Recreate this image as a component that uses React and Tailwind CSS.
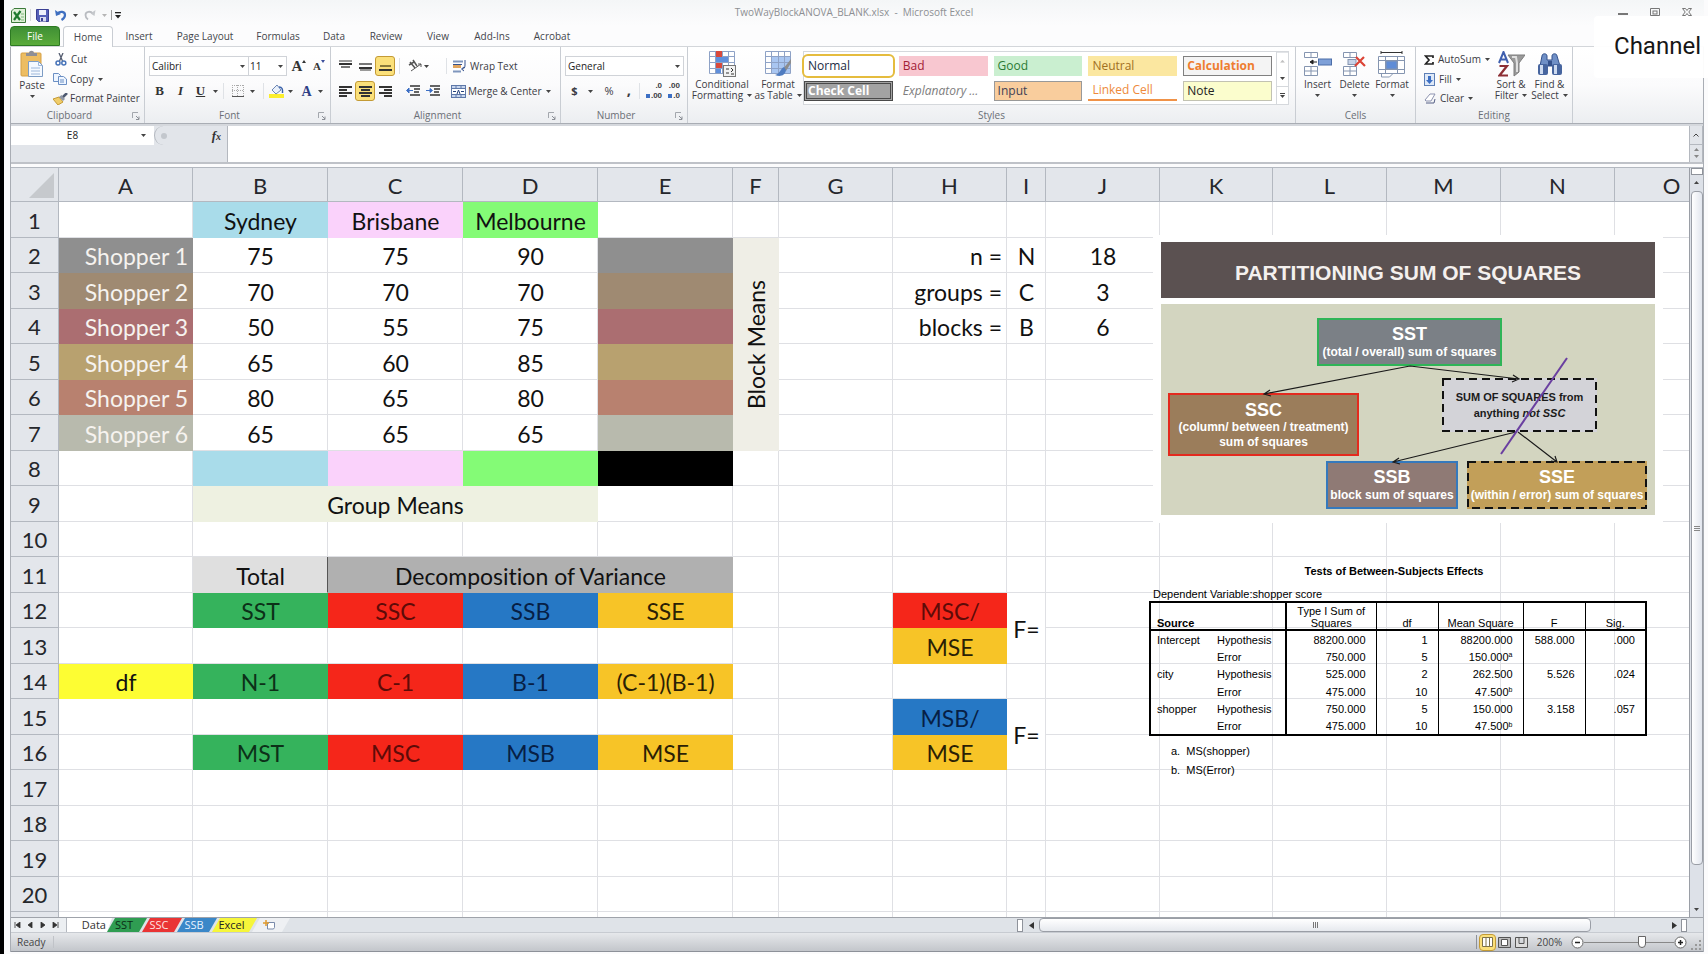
import React from 'react';

const UI = "font-['Open_Sans','Noto_Sans',sans-serif]";

/* ---------- small shared pieces ---------- */

function Caret({ className = 'text-[#444]' }) {
  return (
    <svg width="5" height="3" viewBox="0 0 5 3" className={'shrink-0 ' + className} aria-hidden="true">
      <path d="M0 0h5L2.5 3z" fill="currentColor" />
    </svg>
  );
}

function IconButton({ label, className = '', children }) {
  return (
    <button type="button" aria-label={label} className={'flex h-5 items-center justify-center ' + className}>
      {children}
    </button>
  );
}

function Group({ title, className = '', launcher = false, children }) {
  return (
    <section aria-label={title} className={'flex h-[76px] shrink-0 flex-col border-r border-[#c9cdd3] ' + className}>
      <div className="h-[61px]">{children}</div>
      <div className={'relative flex h-[15px] items-center justify-center text-[10px] leading-[15px] text-[#6b6f76] ' + (launcher ? 'pr-4' : '')}>
        {title}
        {launcher && (
          <button type="button" aria-label={title + ' options'} className="absolute right-1 top-1">
            <svg width="8" height="8" viewBox="0 0 8 8" fill="none" stroke="#a3a7ad">
              <path d="M.5 6V.5H6" />
              <path d="M4 4l3 3M7 4.5V7.5H4" stroke="#8b8f96" />
            </svg>
          </button>
        )}
      </div>
    </section>
  );
}

function Divider() {
  return <span className="h-4 w-px bg-[#dfe2e6]" />;
}

function Lines({ rows, w = 13 }) {
  return (
    <svg width={w} height="12" viewBox="0 0 13 12" aria-hidden="true">
      {rows.map(([x, y, len, c], i) => (
        <rect key={i} x={x} y={y} width={len} height="2" fill={c || '#333'} />
      ))}
    </svg>
  );
}

function BigButton({ lines, className = '', children }) {
  return (
    <button type="button" className={'flex h-14 flex-col items-center text-[10px] leading-[11px] text-[#3b3b44] ' + className}>
      <span className="flex h-[30px] items-center">{children}</span>
      <span className="whitespace-nowrap">{lines[0]}</span>
      <span className="flex h-[11px] items-center gap-1 whitespace-nowrap">
        {lines[1]}
        <Caret />
      </span>
    </button>
  );
}

/* ---------- title bar and tabs ---------- */

function TitleBar() {
  return (
    <header className="relative flex h-[26px] items-center bg-gradient-to-b from-[#f4f6f7] to-[#fcfcfd] pl-px">
      <svg width="15" height="15" viewBox="0 0 15 15" className="mt-1" aria-hidden="true">
        <path d="M3 .5h11.5v14H.5V3z" fill="#dff0d8" stroke="#3c7a3a" />
        <path d="M3 4l6 8M9.500 3L3 12" stroke="#1f7a2e" strokeWidth="2.200" />
        <path d="M10 6h3M10 9h3M10 12h3" stroke="#7fb77a" />
      </svg>
      <span className="ml-1 mt-1 h-3 w-px bg-[#d5d7da]" />
      <button type="button" aria-label="Save" className="ml-[5px] mt-1">
        <svg width="13" height="13" viewBox="0 0 13 13">
          <path d="M.5.5h12v12h-10l-2-2z" fill="#5560b8" stroke="#3a3f93" />
          <rect x="3" y="1" width="7" height="5" fill="#eef1fb" />
          <rect x="4" y="8" width="6" height="4.500" fill="#d9dcf0" />
          <rect x="5" y="9" width="2" height="3" fill="#3a3f93" />
        </svg>
      </button>
      <button type="button" aria-label="Undo" className="ml-1.5 mt-1 flex items-center gap-1.5 text-[#222]">
        <svg width="12" height="12" viewBox="0 0 12 12" fill="none">
          <path d="M2.500 4.500C5 1.800 10 2.300 10 6c0 2-1.500 3.800-3.500 5" stroke="#3f6fc0" strokeWidth="2.200" />
          <path d="M0 1l1 6 5-2z" fill="#3f6fc0" />
        </svg>
        <Caret />
      </button>
      <button type="button" aria-label="Redo" className="ml-1.5 mt-1 flex items-center gap-1.5">
        <svg width="12" height="12" viewBox="0 0 12 12" fill="none">
          <path d="M9 4.500C6.500 1.800 1.500 2.300 1.500 6c0 2 1 3.500 2.500 4.500" stroke="#b9bcc1" strokeWidth="1.800" />
          <path d="M11.500 1l-1 6-4-2.500z" fill="#c5c8cc" />
        </svg>
        <Caret className="text-[#b5b5b5]" />
      </button>
      <span className="ml-1 mt-1 h-2.5 w-px bg-[#999]" />
      <button type="button" aria-label="Customize toolbar" className="ml-[3px] mt-1">
        <svg width="6" height="7" viewBox="0 0 6 7" fill="#222">
          <rect width="6" height="1.300" />
          <path d="M0 3h6L3 6.500z" />
        </svg>
      </button>
      <h1 className="absolute inset-x-0 top-1 pr-1.5 text-center text-[10px] leading-4 text-[#8d8f93]">
        TwoWayBlockANOVA_BLANK.xlsx&nbsp; -&nbsp; Microsoft Excel
      </h1>
      <div className="relative ml-auto flex items-center gap-[22px] pb-0.5 pr-3 text-[#666]">
        <button type="button" aria-label="Minimize"><svg width="10" height="8" viewBox="0 0 10 8"><rect y="5" width="10" height="2" fill="#777" /></svg></button>
        <button type="button" aria-label="Restore"><svg width="10" height="8" viewBox="0 0 10 8" fill="none" stroke="#777"><path d="M.5 7.500v-7h9v7z" /><rect x="3" y="3" width="4" height="3" /></svg></button>
        <button type="button" aria-label="Close"><svg width="10" height="8" viewBox="0 0 10 8" fill="none" stroke="#777"><path d="M.5.500h3L5 2.500 6.500.500h3L6.800 4l2.700 3.500h-3L5 5.500 3.500 7.500h-3L3.200 4z" /></svg></button>
      </div>
    </header>
  );
}

const TABS = [
  ['Insert', 'w-[52px]'],
  ['Page Layout', 'w-20'],
  ['Formulas', 'w-[66px]'],
  ['Data', 'w-[46px]'],
  ['Review', 'w-[58px]'],
  ['View', 'w-[46px]'],
  ['Add-Ins', 'w-[62px]'],
  ['Acrobat', 'w-[58px]'],
];

function RibbonTabs() {
  return (
    <nav className="flex h-[21px] items-stretch border-b border-[#d3d6da] bg-[#fcfcfd] text-[10px] text-[#44464c]">
      <button type="button" className="w-[50px] rounded-t-sm border border-[#2d7a22] bg-gradient-to-b from-[#3f8f35] to-[#5aab3a] pt-px text-white">File</button>
      <button type="button" className="-mb-px ml-[3px] w-[50px] rounded-t-sm border border-b-0 border-[#c9cdd3] bg-white">Home</button>
      {TABS.map(([t, w]) => (
        <button key={t} type="button" className={'pt-px ' + w}>{t}</button>
      ))}
    </nav>
  );
}

/* ---------- ribbon groups ---------- */

function ClipboardGroup() {
  return (
    <Group title="Clipboard" launcher className="w-[134px]">
      <div className="flex pt-[3px]">
        <button type="button" className="flex w-[42px] flex-col items-center text-[10px] leading-[11px] text-[#3b3b44]">
          <svg width="24" height="28" viewBox="0 0 24 28" aria-hidden="true">
            <rect x="1" y="3" width="20" height="23" rx="1" fill="#edbd62" stroke="#d59f45" />
            <path d="M6 5V3h3c0-3 5-3 5 0h3v3H6z" fill="#8f8f96" />
            <path d="M8.500 11.500h10l4 4v11h-14z" fill="#f5f9ff" stroke="#7d9cc4" />
            <path d="M18.500 11.500v4h4M11 18h9M11 21h9M11 24h9" stroke="#9db7da" fill="none" />
          </svg>
          <span className="mt-0.5">Paste</span>
          <span className="mt-1"><Caret /></span>
        </button>
        <div className="flex flex-col text-[10px] leading-[19px] text-[#3b3b44]">
          <button type="button" className="flex h-[19px] items-center gap-1 pl-0.5">
            <svg width="12" height="13" viewBox="0 0 12 13" fill="none">
              <path d="M4 0l3.500 8M8 0L4.500 8" stroke="#555d70" strokeWidth="1.300" />
              <circle cx="3" cy="10" r="2" stroke="#4673b8" strokeWidth="1.500" />
              <circle cx="8.800" cy="10" r="2" stroke="#4673b8" strokeWidth="1.500" />
            </svg>
            Cut
          </button>
          <button type="button" className="flex h-5 items-center gap-[3px]">
            <svg width="14" height="12" viewBox="0 0 14 12" fill="#eef5ff" stroke="#6b8fc4">
              <path d="M.5.500h5l2 2v6h-7z" /><path d="M5.500 3.500h5l3 2.500v5.500h-8z" /><path d="M7 7h4M7 9h4" />
            </svg>
            Copy <span className="ml-0.5"><Caret /></span>
          </button>
          <button type="button" className="flex h-[19px] items-center gap-0.5 whitespace-nowrap">
            <svg width="15" height="12" viewBox="0 0 15 12">
              <path d="M0 6l6-2 4 5-5 3z" fill="#f0cd6a" stroke="#c59a35" /><path d="M6 4l4 4 2-2-3.500-4z" fill="#8f96a5" /><path d="M10 4l4-4" stroke="#4c5870" strokeWidth="2.500" />
            </svg>
            Format Painter
          </button>
        </div>
      </div>
    </Group>
  );
}

function FontGroup() {
  return (
    <Group title="Font" launcher className="w-[186px] text-[#333]">
      <div className="flex h-[29px] items-end pl-1">
        <label className="relative flex h-5 w-[100px] items-center">
          <select aria-label="Font" className="h-5 w-full appearance-none border border-[#d0d3d8] bg-white pl-0.5 text-[10px] text-[#222]"><option>Calibri</option></select>
          <span className="absolute right-1"><Caret /></span>
        </label>
        <label className="relative -ml-px flex h-5 w-[39px] items-center">
          <select aria-label="Font size" className="h-5 w-full appearance-none border border-[#d0d3d8] bg-white pl-px text-[10px] text-[#222]"><option>11</option></select>
          <span className="absolute right-1"><Caret /></span>
        </label>
        <IconButton label="Grow font" className="ml-1 w-4 font-['Liberation_Serif',serif] text-[15px] font-bold">
          A<svg width="4" height="12" viewBox="0 0 4 12"><path d="M0 3l2-3 2 3z" fill="#333" /></svg>
        </IconButton>
        <IconButton label="Shrink font" className="ml-1 w-4 font-['Liberation_Serif',serif] text-[11px] font-bold">
          A<svg width="4" height="12" viewBox="0 0 4 12"><path d="M0 0h4L2 3z" fill="#3c4f9c" /></svg>
        </IconButton>
      </div>
      <div className="flex h-[30px] items-center pl-1 font-['Liberation_Serif',serif]">
        <IconButton label="Bold" className="w-[21px] text-[13px] font-bold">B</IconButton>
        <IconButton label="Italic" className="w-[21px] text-[13px] font-bold italic">I</IconButton>
        <IconButton label="Underline" className="w-[32px] gap-2 text-[13px] font-bold underline">U<Caret /></IconButton>
        <Divider />
        <IconButton label="Borders" className="w-[39px] gap-1.5">
          <svg width="12" height="12" viewBox="0 0 12 12" fill="none"><path d="M.5 0v12M5.500 0v12M11.500 0v12M0 .5h12M0 5.500h12" stroke="#aaa" strokeDasharray="1 1" /><path d="M0 11.500h12" stroke="#555" /></svg>
          <Caret />
        </IconButton>
        <Divider />
        <IconButton label="Fill color" className="w-[33px] gap-1">
          <svg width="15" height="14" viewBox="0 0 15 14"><rect y="10" width="15" height="4" fill="#fbee2e" /><path d="M3 6l5-5 4 5-5 4z" fill="#eaf1fb" stroke="#6d87b5" /><path d="M10 3c3 0 4 2 3.500 6" stroke="#3a62ab" strokeWidth="1.500" fill="none" /></svg>
          <Caret />
        </IconButton>
        <IconButton label="Font color" className="w-[30px] gap-1.5 text-[14px] font-bold text-[#2f3f86]">A<Caret /></IconButton>
      </div>
    </Group>
  );
}

const HI = 'w-5 rounded-[3px] border border-[#c39a35] bg-[#fbe07a]';

function AlignmentGroup() {
  const indent = (flip) => (
    <svg width="14" height="12" viewBox="0 0 14 12">
      <path d="M4 1h10M8 4h6M8 7h5M4 10h10" stroke="#333" strokeWidth="1.500" />
      <path d={flip ? 'M0 5.500h6M4 3.500l2.500 2L4 7.500z' : 'M1 5.500h6M3 3L.5 5.500 3 8z'} stroke="#3c6fc4" fill="#3c6fc4" />
    </svg>
  );
  return (
    <Group title="Alignment" launcher className="w-[230px] text-[10px] text-[#3b3b44]">
      <div className="flex h-[29px] items-end pl-1">
        <IconButton label="Top align" className="w-5"><Lines rows={[[0, 0, 13, '#999'], [0, 3, 13], [2, 6, 9, '#777']]} /></IconButton>
        <IconButton label="Middle align" className="w-5"><Lines rows={[[0, 3, 13, '#777'], [0, 7, 13], [1, 9, 11, '#999']]} /></IconButton>
        <IconButton label="Bottom align" className={HI}><Lines rows={[[1, 5, 11, '#8a7a3a'], [0, 9, 13]]} /></IconButton>
        <span className="ml-1 flex h-5 items-center"><Divider /></span>
        <IconButton label="Orientation" className="ml-1.5 w-6 gap-0.5">
          <svg width="14" height="14" viewBox="0 0 14 14" fill="none" stroke="#555"><path d="M3 12L13 5M10 5h3v3" /><path d="M2 3l5 6M5 1l4 6M1 6l5-3" strokeWidth="1.500" /></svg>
          <Caret />
        </IconButton>
        <span className="ml-4 flex h-5 items-center"><Divider /></span>
        <button type="button" className="ml-1.5 flex h-5 items-center gap-0.5">
          <svg width="15" height="13" viewBox="0 0 15 13" fill="none"><path d="M0 1.500h10M0 11.500h8" stroke="#7f96bd" strokeWidth="2" /><rect y="5" width="8" height="3" fill="#e0a45d" /><path d="M0 4.500h9M12 0v5c0 3-1 4-3 4M11 7L8.500 9 11 11" stroke="#35518d" /></svg>
          Wrap Text
        </button>
      </div>
      <div className="flex h-[30px] items-center pl-1">
        <IconButton label="Align left" className="w-5"><Lines rows={[[0, 1, 13], [0, 4, 8], [0, 7, 13], [0, 10, 8]]} /></IconButton>
        <IconButton label="Center" className={HI}><Lines rows={[[0, 1, 13], [2, 4, 9], [0, 7, 13], [2, 10, 9]]} /></IconButton>
        <IconButton label="Align right" className="w-5"><Lines rows={[[0, 1, 13], [5, 4, 8], [0, 7, 13], [5, 10, 8]]} /></IconButton>
        <span className="ml-1"><Divider /></span>
        <IconButton label="Decrease indent" className="ml-1 w-5">{indent(false)}</IconButton>
        <IconButton label="Increase indent" className="w-5">{indent(true)}</IconButton>
        <span className="ml-0.5"><Divider /></span>
        <button type="button" className="ml-1.5 flex h-5 items-center gap-0.5 whitespace-nowrap">
          <svg width="15" height="13" viewBox="0 0 15 13" fill="none"><rect x=".5" y=".5" width="14" height="12" fill="#c8d6ee" stroke="#5e78a8" /><path d="M1 3.500h13M1 9.500h13M5 1v2M10 1v2M5 10v2M10 10v2" stroke="#5e78a8" /><rect x="1" y="4" width="13" height="5" fill="#fff" /><path d="M2 6.500h3M13 6.500h-3M6 9l1.500-4L9 9" stroke="#26427c" /></svg>
          Merge &amp; Center <span className="ml-0.5"><Caret /></span>
        </button>
      </div>
    </Group>
  );
}

function NumberGroup() {
  const dec = (t, b) => (
    <span className="flex flex-col items-end font-['Liberation_Sans',sans-serif] text-[8px] font-bold leading-[10px]"><span>{t}</span><span className="flex items-center"><i className="mr-px size-1 bg-[#3c6fc4]" />{b}</span></span>
  );
  return (
    <Group title="Number" launcher className="w-[127px] text-[#3b3b44]">
      <div className="flex h-[29px] items-end pl-1">
        <label className="relative flex h-5 w-[119px] items-center">
          <select aria-label="Number format" className="h-5 w-full appearance-none border border-[#d0d3d8] bg-white pl-0.5 text-[10px] text-[#222]"><option>General</option></select>
          <span className="absolute right-1"><Caret /></span>
        </label>
      </div>
      <div className="flex h-[30px] items-center pl-2">
        <IconButton label="Accounting format" className="w-[26px] gap-2.5 text-[11px] font-bold">$<Caret /></IconButton>
        <IconButton label="Percent style" className="ml-1 w-5 text-[11px]">%</IconButton>
        <IconButton label="Comma style" className="w-5 pb-1 text-[15px] font-bold">,</IconButton>
        <Divider />
        <IconButton label="Increase decimal" className="ml-1 w-5">{dec('.0', '.00')}</IconButton>
        <IconButton label="Decrease decimal" className="w-5">{dec('.00', '.0')}</IconButton>
      </div>
    </Group>
  );
}

function StylesGroup() {
  const gridLines = 'M.5.500h25v22H.5zM6.500 0v23M13.500 0v23M19.500 0v23M0 5.500h26M0 11.500h26M0 17.500h26';
  const item = 'flex h-5 items-center px-1 text-left text-[12px] leading-4 whitespace-nowrap';
  return (
    <Group title="Styles" className="w-[608px]">
      <div className="flex">
        <BigButton lines={['Conditional', 'Formatting']} className="w-[68px] pt-0.5">
          <svg width="27" height="26" viewBox="0 0 27 26" fill="none">
            <path d={gridLines} fill="#fff" stroke="#8ea2c6" />
            <rect x="7" y="0" width="6" height="6" fill="#d9493b" /><rect x="7" y="6" width="12" height="5" fill="#5f8fdc" /><rect x="7" y="12" width="6" height="5" fill="#d9493b" /><rect x="7" y="18" width="5" height="4" fill="#5f8fdc" />
            <rect x="14.500" y="14.500" width="12" height="11" fill="#f2f2f2" stroke="#777" /><path d="M17 18h3M17 22h3M22 17l2 2-2 2M22 23h3" stroke="#333" />
          </svg>
        </BigButton>
        <BigButton lines={['Format', 'as Table']} className="w-11 pt-0.5">
          <svg width="27" height="26" viewBox="0 0 27 26" fill="none">
            <rect x="7" y="6" width="18" height="16" fill="#a9c6f1" /><path d={gridLines} stroke="#8ea2c6" />
            <path d="M26 8L18 18l3 2 5-8z" fill="#8d8d8d" /><path d="M19 16c-4 2-3 6-9 8 5 2 10 1 11-5z" fill="#4f7cc0" />
          </svg>
        </BigButton>
        <div className="ml-[3px] mt-1 flex h-[54px] flex-1 border border-[#d5d8dc] bg-white">
          <div className="grid flex-1 grid-cols-5 content-center gap-x-1.5 gap-y-[5px] pr-1">
            <button type="button" className={item + ' rounded-sm bg-white text-[#1c2c44] outline-2 outline-[#e5bc3e]'}>Normal</button>
            <button type="button" className={item + ' bg-[#f8c7d0] text-[#a32036]'}>Bad</button>
            <button type="button" className={item + ' bg-[#caefd0] text-[#2c7a35]'}>Good</button>
            <button type="button" className={item + ' bg-[#fbe7a0] text-[#a1701f]'}>Neutral</button>
            <button type="button" className={item + ' border border-[#808080] bg-[#f4f4f4] !px-[3px] font-bold text-[#ee7d2f]'}>Calculation</button>
            <button type="button" className={item + ' border-[3px] border-double border-[#4a4a4a] bg-[#a3a3a3] !px-px font-bold text-white'}>Check Cell</button>
            <button type="button" className={item + ' italic text-[#7d7d7d]'}>Explanatory ...</button>
            <button type="button" className={item + ' border border-[#999] bg-[#f9cd9d] !px-[3px] text-[#3f3f55]'}>Input</button>
            <button type="button" className={item + ' border-b-2 border-[#f09248] text-[#ee8a3c]'}>Linked Cell</button>
            <button type="button" className={item + ' border border-[#c2c2b2] bg-[#fbfdcd] !px-[3px] text-[#222]'}>Note</button>
          </div>
          <div className="flex w-3 flex-col divide-y divide-[#d5d8dc] border-l border-[#d5d8dc]">
            <button type="button" aria-label="Previous styles" className="flex flex-1 rotate-180 items-center justify-center"><Caret className="text-[#c0c0c0]" /></button>
            <button type="button" aria-label="Next styles" className="flex flex-1 items-center justify-center"><Caret /></button>
            <button type="button" aria-label="More styles" className="flex flex-1 flex-col items-center justify-center gap-px"><i className="h-px w-[5px] bg-[#444]" /><Caret /></button>
          </div>
        </div>
        <span className="w-1.5" />
      </div>
    </Group>
  );
}

function CellsGroup() {
  return (
    <Group title="Cells" className="w-[120px]">
      <div className="flex pl-[3px]">
        <BigButton lines={['Insert', '']} className="w-[37px] pt-0.5">
          <svg width="28" height="25" viewBox="0 0 28 25" fill="#fff" stroke="#8595b0">
            <path d="M.5.500h13v5H.5zM7 .5v5M.5 14.500h13v9H.5zM7 14.500v9M.5 19h13" /><rect x="14.500" y="7" width="13" height="6" fill="#7ea0d8" stroke="#4d6ea8" /><path d="M7 10h6M9 8l-3 2 3 2z" stroke="#222" fill="#222" />
          </svg>
        </BigButton>
        <BigButton lines={['Delete', '']} className="w-[37px] pt-0.5">
          <svg width="24" height="25" viewBox="0 0 24 25" fill="#fff" stroke="#8595b0">
            <path d="M.5.500h13v5H.5zM7 .5v5M.5 14.500h13v9H.5zM7 14.500v9M.5 19h13" /><rect x="5" y="7.500" width="8" height="5" fill="#c7d3e8" /><path d="M13 5l9 9M21 5l-9 9" stroke="#dc4436" strokeWidth="2.200" />
          </svg>
        </BigButton>
        <BigButton lines={['Format', '']} className="w-[38px] pt-0.5">
          <svg width="28" height="27" viewBox="0 0 28 27" fill="#fff" stroke="#8595b0">
            <path d="M3 1.500h21M3 0v3M24 0v3" stroke="#333" /><path d="M.5 5.500h26v17H.5zM7.500 5.500v17M19.500 5.500v17M.5 9.500h26M.5 18.500h26" /><rect x="8" y="10" width="11" height="8" fill="#5f8cd6" /><path d="M3.500 23v3h8l3-3" />
          </svg>
        </BigButton>
      </div>
    </Group>
  );
}

function EditingGroup() {
  return (
    <Group title="Editing" className="w-[157px]">
      <div className="flex pl-2">
        <div className="flex w-[67px] flex-col pt-[3px] text-[10px] text-[#3b3b44]">
          <button type="button" className="flex h-[19px] items-center gap-1 whitespace-nowrap">
            <svg width="10" height="10" viewBox="0 0 10 10" fill="none"><path d="M9 3V1H1.500L5 5 1.500 9H9V7" stroke="#222" strokeWidth="1.700" /></svg>
            AutoSum <Caret />
          </button>
          <button type="button" className="flex h-5 items-center gap-1">
            <svg width="11" height="13" viewBox="0 0 11 13"><rect x=".5" y=".5" width="10" height="12" fill="#dfe9f8" stroke="#5d7fb6" /><path d="M4 3h3v4h2l-3.500 4L2 7h2z" fill="#3c6fc4" /></svg>
            Fill <Caret />
          </button>
          <button type="button" className="flex h-[19px] items-center gap-1">
            <svg width="12" height="11" viewBox="0 0 12 11"><path d="M1 7l5-6h5L7 8H2z" fill="#fff" stroke="#8d93b0" /><path d="M2 10h8l1-4" stroke="#555f85" fill="none" /></svg>
            Clear <Caret />
          </button>
        </div>
        <BigButton lines={['Sort &', 'Filter']} className="w-10 pt-0.5">
          <svg width="27" height="26" viewBox="0 0 27 26" fill="none">
            <path d="M1 12L5.500 1 10 12M3 8.500h5" stroke="#3f5fae" strokeWidth="2" /><path d="M1.500 15H9L1.500 24.500H10" stroke="#8d2f35" strokeWidth="2.200" />
            <path d="M10 4h17l-6 8v9l-5 4V12z" fill="#9a9a9a" stroke="#7d7d7d" /><path d="M14 6h4l1 6v9" stroke="#e0e0e0" strokeWidth="2" />
          </svg>
        </BigButton>
        <BigButton lines={['Find &', 'Select']} className="w-[37px] pt-0.5">
          <svg width="26" height="24" viewBox="0 0 26 24">
            <path d="M5 4c0-3 5-3 5 0v4h5V4c0-3 5-3 5 0l3 10H3z" fill="#6f8fc6" stroke="#34518c" />
            <rect x="1" y="12" width="10" height="11" rx="2" fill="#47659f" /><rect x="15" y="12" width="10" height="11" rx="2" fill="#47659f" />
            <rect x="3" y="13" width="3" height="9" fill="#cddaf0" /><rect x="17" y="13" width="3" height="9" fill="#cddaf0" /><rect x="11" y="9" width="4" height="5" fill="#34518c" />
          </svg>
        </BigButton>
      </div>
    </Group>
  );
}

function Ribbon() {
  return (
    <div className="flex h-[77px] overflow-hidden border-b border-[#a9adb4] bg-gradient-to-b from-white via-[#fbfbfc] to-[#eceef1]">
      <ClipboardGroup />
      <FontGroup />
      <AlignmentGroup />
      <NumberGroup />
      <StylesGroup />
      <CellsGroup />
      <EditingGroup />
    </div>
  );
}

function FormulaBar() {
  return (
    <div className="flex h-10 border-b-2 border-t-2 border-b-[#bfc2c8] border-t-[#d5d8dd] bg-[#e2e5ea]">
      <div className="relative h-[19px] w-[143px]">
        <input aria-label="Name box" defaultValue="E8" className="block h-[19px] w-full bg-white pr-5 text-center text-[10px] leading-[19px] text-[#222]" />
        <span className="absolute right-2 top-2 flex"><Caret /></span>
      </div>
      <div className="flex h-[19px] w-[73px] items-center justify-between rounded-l-full border-l border-[#b4b8bf] pl-1.5 pr-1.5">
        <i className="size-1.5 rounded-full bg-[#c3c7cd]" />
        <button type="button" aria-label="Insert function" className="font-['Liberation_Serif',serif] text-[13px] font-bold italic leading-[19px] text-[#333]">f<span className="text-[10px]">x</span></button>
      </div>
      <input aria-label="Formula" className="flex-1 border-l border-[#b4b8bf] bg-white px-1" />
      <div className="flex w-[14px] flex-col divide-y divide-[#b4b8bf] border-x border-[#b4b8bf]">
        <button type="button" aria-label="Collapse formula bar" className="flex flex-1 items-center justify-center">
          <svg width="6" height="4" viewBox="0 0 6 4" fill="none" stroke="#444"><path d="M.5 3.500L3 1l2.500 2.500" /></svg>
        </button>
        <div className="flex flex-1 flex-col items-center justify-evenly"><span className="flex rotate-180"><Caret className="text-[#888]" /></span><Caret className="text-[#888]" /></div>
      </div>
    </div>
  );
}

/* ---------- worksheet ---------- */

const COLS = [
  ['A', 'w-[134px]'], ['B', 'w-[135px]'], ['C', 'w-[135px]'], ['D', 'w-[135px]'], ['E', 'w-[135px]'],
  ['F', 'w-[46px]'], ['G', 'w-[114px]'], ['H', 'w-[114px]'], ['I', 'w-[39px]'], ['J', 'w-[114px]'],
  ['K', 'w-[113px]'], ['L', 'w-[114px]'], ['M', 'w-[114px]'], ['N', 'w-[114px]'], ['O', 'w-[114px]'],
];

const GREEN = 'bg-[#35b35c] border-[#35b35c] text-[#0c3018]';
const RED = 'bg-[#f5261a] border-[#f5261a] text-[#5e0b08]';
const BLUE = 'bg-[#2678c5] border-[#2678c5] text-[#071f45]';
const GOLD = 'bg-[#f7c427] border-[#f7c427] text-[#2b1f05]';
const SKY = 'bg-[#a9dcea] border-[#a9dcea]';
const PINK = 'bg-[#fad2fb] border-[#fad2fb]';
const LIME = 'bg-[#84fb76] border-[#84fb76]';

const CELLS = {
  B1: { t: 'Sydney', c: SKY }, C1: { t: 'Brisbane', c: PINK }, D1: { t: 'Melbourne', c: LIME },
  B8: { c: SKY }, C8: { c: PINK }, D8: { c: LIME }, E8: { c: 'bg-black border-black' },
  F2: { t: 'Block Means', c: 'bg-[#efeee6] border-[#efeee6]', rs: 6, vertical: true },
  B9: { t: 'Group Means', c: 'bg-[#eef1e1] border-[#eef1e1]', cs: 3 },
  H2: { t: 'n =', right: true }, I2: { t: 'N' }, J2: { t: '18' },
  H3: { t: 'groups =', right: true }, I3: { t: 'C' }, J3: { t: '3' },
  H4: { t: 'blocks =', right: true }, I4: { t: 'B' }, J4: { t: '6' },
  B11: { t: 'Total', c: 'bg-[#dfdfdf] border-b-[#dfdfdf] border-r-[#555]' },
  C11: { t: 'Decomposition of Variance', c: 'bg-[#b0b0b0] border-[#b0b0b0]', cs: 3 },
  B12: { t: 'SST', c: GREEN }, C12: { t: 'SSC', c: RED }, D12: { t: 'SSB', c: BLUE }, E12: { t: 'SSE', c: GOLD },
  A14: { t: 'df', c: 'bg-[#fdfd33] border-[#fdfd33]' },
  B14: { t: 'N-1', c: GREEN }, C14: { t: 'C-1', c: RED }, D14: { t: 'B-1', c: BLUE }, E14: { t: '(C-1)(B-1)', c: GOLD },
  B16: { t: 'MST', c: GREEN }, C16: { t: 'MSC', c: RED }, D16: { t: 'MSB', c: BLUE }, E16: { t: 'MSE', c: GOLD },
  H12: { t: 'MSC/', c: RED }, H13: { t: 'MSE', c: GOLD }, I12: { t: 'F=', rs: 2 },
  H15: { t: 'MSB/', c: BLUE }, H16: { t: 'MSE', c: GOLD }, I15: { t: 'F=', rs: 2 },
};

const SHOPPERS = [
  ['bg-[#8f8f8f] border-[#8f8f8f]', 75, 75, 90],
  ['bg-[#9f8a72] border-[#9f8a72]', 70, 70, 70],
  ['bg-[#ab6e71] border-[#ab6e71]', 50, 55, 75],
  ['bg-[#b8a16f] border-[#b8a16f]', 65, 60, 85],
  ['bg-[#b8816f] border-[#b8816f]', 80, 65, 80],
  ['bg-[#b8baad] border-[#b8baad]', 65, 65, 65],
];
SHOPPERS.forEach(([c, b, cc, d], i) => {
  const r = i + 2;
  CELLS['A' + r] = { t: 'Shopper ' + (i + 1), c: c + ' text-[#f6f3ef]', right: true };
  CELLS['B' + r] = { t: b };
  CELLS['C' + r] = { t: cc };
  CELLS['D' + r] = { t: d };
  CELLS['E' + r] = { c };
});

const COVERED = new Set();
Object.entries(CELLS).forEach(([key, v]) => {
  const col = COLS.findIndex(([n]) => n === key[0]);
  const row = Number(key.slice(1));
  for (let x = 0; x < (v.cs || 1); x++)
    for (let y = 0; y < (v.rs || 1); y++)
      if (x || y) COVERED.add(COLS[col + x][0] + (row + y));
});

function Cell({ id }) {
  if (COVERED.has(id)) return null;
  const v = CELLS[id] || {};
  return (
    <td
      colSpan={v.cs}
      rowSpan={v.rs}
      className={'overflow-hidden whitespace-nowrap border-b border-r p-0 pt-0.5 ' + (v.right ? 'pr-1 text-right ' : 'pl-px text-center ') + (v.c || 'border-[#dfe0e4]')}
    >
      {v.vertical ? <span className="inline-block rotate-180 align-middle [writing-mode:vertical-rl]">{v.t}</span> : v.t}
    </td>
  );
}

function Grid() {
  const th = 'border-b border-r border-[#b3b8c0] bg-[#e3e6eb] p-0 pt-0.5 text-center text-[22px] font-normal text-[#25272c]';
  return (
    <table className="w-[1718px] table-fixed border-separate border-spacing-0 font-['Lato',sans-serif] text-[23px] leading-7 text-[#111] [font-variant-ligatures:none]">
      <colgroup>
        <col className="w-12" />
        {COLS.map(([n, w]) => <col key={n} className={w} />)}
      </colgroup>
      <thead>
        <tr className="h-[34px]">
          <th className={th} aria-label="Select all">
            <svg width="25" height="25" viewBox="0 0 25 25" className="ml-auto mr-1"><path d="M25 0v25H0z" fill="#c6c9cd" /></svg>
          </th>
          {COLS.map(([n]) => <th key={n} scope="col" className={th}>{n}</th>)}
        </tr>
      </thead>
      <tbody>
        {Array.from({ length: 21 }, (_, i) => i + 1).map((r) => (
          <tr key={r} className="h-[35px] odd:h-9">
            <th scope="row" className={th}>{r <= 20 ? r : ''}</th>
            {COLS.map(([n]) => <Cell key={n} id={n + r} />)}
          </tr>
        ))}
      </tbody>
    </table>
  );
}

function Node({ className, title, children }) {
  return (
    <div className={'absolute flex flex-col items-center justify-center whitespace-nowrap text-center font-bold leading-4 ' + className}>
      {title && <strong className="text-[18px] leading-5">{title}</strong>}
      {children}
    </div>
  );
}

function Dashes({ w, h }) {
  return (
    <svg width={w} height={h} viewBox={`0 0 ${w} ${h}`} className="absolute inset-0" aria-hidden="true">
      <rect x="1" y="1" width={w - 2} height={h - 2} fill="none" stroke="#111" strokeWidth="2" strokeDasharray="8 5" />
    </svg>
  );
}

function Slide() {
  return (
    <figure className="absolute left-[1142px] top-[67px] w-[510px] bg-white px-2 pb-2 pt-[7px] font-['Liberation_Sans',sans-serif]">
      <h2 className="flex h-14 items-center justify-center bg-[#5b5151] pt-1.5 text-[21px] font-bold text-[#f4f0ee]">PARTITIONING SUM OF SQUARES</h2>
      <div className="relative mt-1.5 h-[211px] bg-[#d3d5c0]">
        <Node title="SST" className="left-[156px] top-3.5 h-12 w-[185px] border-2 border-[#2fb457] bg-[#7b8086] text-[12px] text-white">(total / overall) sum of squares</Node>
        <Node title="SSC" className="left-[7px] top-[89px] h-[63px] w-[191px] border-2 border-[#e32a1e] bg-[#9b7d5b] text-[12px] text-white">
          <span className="leading-[15px]">(column/ between / treatment)<br />sum of squares</span>
        </Node>
        <Node title="SSB" className="left-[165px] top-[157px] h-12 w-[132px] border-2 border-[#3579bd] bg-[#8f7a75] text-[12px] text-white">block sum of squares</Node>
        <Node title="SSE" className="left-[306px] top-[157px] h-12 w-[180px] bg-[#c29f59] text-[12px] text-white">
          (within / error) sum of squares
          <Dashes w={180} h={48} />
        </Node>
        <Node className="left-[281px] top-[74px] h-[54px] w-[155px] bg-[#d3d3d8] text-[11px] text-[#1b1b1b]">
          <span>SUM OF SQUARES from<br />anything <em>not SSC</em></span>
          <Dashes w={155} h={54} />
        </Node>
        <svg width="494" height="211" viewBox="0 0 494 211" className="absolute inset-0" fill="none" stroke="#1a1a1a" aria-hidden="true">
          <path d="M249 62L103 90M109 86l-6 4 7 2M249 62L358 75M352 71l6 4-7 3M355 128L232 158M238 154l-6 4 7 2M357 128L396 158M394 152l2 6-6-1" strokeWidth="1.200" />
          <path d="M406 54L340 150" stroke="#6a3fa0" strokeWidth="2" />
        </svg>
      </div>
    </figure>
  );
}

const EFFECTS = [
  ['Intercept', 'Hypothesis', '88200.000', '1', '88200.000', '', '588.000', '.000'],
  ['', 'Error', '750.000', '5', '150.000', 'a', '', ''],
  ['city', 'Hypothesis', '525.000', '2', '262.500', '', '5.526', '.024'],
  ['', 'Error', '475.000', '10', '47.500', 'b', '', ''],
  ['shopper', 'Hypothesis', '750.000', '5', '150.000', '', '3.158', '.057'],
  ['', 'Error', '475.000', '10', '47.500', 'b', '', ''],
];

function EffectsTable() {
  const head = 'border-b-2 border-black p-0 align-bottom ';
  return (
    <div className="absolute left-[1138px] top-[395px] w-[498px] font-['Liberation_Sans',sans-serif] text-[11px] leading-3 text-black">
      <h3 className="pr-2 text-center text-[11px] font-bold leading-4">Tests of Between-Subjects Effects</h3>
      <p className="mt-2 pl-1 leading-[14px]">Dependent Variable:shopper score</p>
      <table className="w-full table-fixed border-collapse border-2 border-black">
        <colgroup>
          <col className="w-[67px]" /><col className="w-[69px]" /><col className="w-[90px]" /><col className="w-[62px]" /><col className="w-[85px]" /><col className="w-[62px]" /><col />
        </colgroup>
        <thead>
          <tr className="h-7">
            <th scope="col" className={head + 'pl-1.5 text-left font-bold'}>Source</th>
            <th className={head + 'border-r-2'} />
            <th scope="col" className={head + 'border-r font-normal'}>Type I Sum of<br />Squares</th>
            <th scope="col" className={head + 'border-r font-normal'}>df</th>
            <th scope="col" className={head + 'border-r font-normal'}>Mean Square</th>
            <th scope="col" className={head + 'border-r font-normal'}>F</th>
            <th scope="col" className={head + 'font-normal'}>Sig.</th>
          </tr>
        </thead>
        <tbody>
          {EFFECTS.map(([s, k, ss, df, ms, sup, f, sig], i) => (
            <tr key={i} className="h-[18px] even:h-[17px]">
              <th scope="row" className="p-0 pl-1.5 text-left font-normal">{s}</th>
              <td className="border-r-2 border-black p-0">{k}</td>
              <td className="border-r border-black p-0 pr-2.5 text-right">{ss}</td>
              <td className="border-r border-black p-0 pr-2.5 text-right">{df}</td>
              <td className="border-r border-black p-0 pr-2.5 text-right">{ms}{sup && <sup className="text-[7px] leading-none">{sup}</sup>}</td>
              <td className="border-r border-black p-0 pr-2.5 text-right">{f}</td>
              <td className="p-0 pr-2.5 text-right">{sig}</td>
            </tr>
          ))}
        </tbody>
      </table>
      <ol className="mt-1.5 pl-[22px] leading-[19px]">
        <li>a.&nbsp; MS(shopper)</li>
        <li>b.&nbsp; MS(Error)</li>
      </ol>
    </div>
  );
}

function VerticalScroll() {
  return (
    <div className="flex w-[14px] shrink-0 flex-col items-center border-l border-[#9a9ea6] bg-[#dde1e8]">
      <span className="h-[7px] w-3 border border-[#8f939b] bg-white" />
      <button type="button" aria-label="Scroll up" className="flex h-4 w-full rotate-180 items-center justify-center"><Caret /></button>
      <div className="flex w-3 flex-1 flex-col items-center justify-center gap-px rounded-sm border border-[#9a9ea6] bg-gradient-to-r from-white to-[#e2e6ee]">
        <i className="h-px w-1.5 bg-[#888]" /><i className="h-px w-1.5 bg-[#888]" /><i className="h-px w-1.5 bg-[#888]" />
      </div>
      <div className="h-9" />
      <button type="button" aria-label="Scroll down" className="flex h-4 w-full items-center justify-center"><Caret /></button>
    </div>
  );
}

/* ---------- sheet tabs and status bar ---------- */

const SHEETS = [
  ['SST', 'w-10 bg-[#2f9d52] text-[#0b2e16]'],
  ['SSC', 'w-10 bg-[#e93434] text-[#ffe3e0]'],
  ['SSB', 'w-10 bg-[#3a87c8] text-[#e6f2ff]'],
  ['Excel', 'w-[45px] bg-[#f6f63a] text-[#222]'],
];

function SheetTabs() {
  const nav = [
    ['First sheet', 'M1 0v6M6 0v6L2 3z'],
    ['Previous sheet', 'M5 0v6L1 3z'],
    ['Next sheet', 'M2 0v6l4-3z'],
    ['Last sheet', 'M6 0v6M1 0v6l4-3z'],
  ];
  return (
    <div className="flex h-[15px] items-stretch border-t border-[#9fa3aa] bg-[#dfe3e8] text-[11px] leading-[14px]">
      <div className="flex w-14 items-center justify-around border-r border-[#b4b8bf] bg-[#eceff2] pr-1">
        {nav.map(([l, d]) => (
          <button key={l} type="button" aria-label={l}><svg width="7" height="6" viewBox="0 0 7 6" fill="#333" stroke="#333" strokeWidth=".8"><path d={d} /></svg></button>
        ))}
      </div>
      <button type="button" className="w-[45px] bg-white pr-1.5 text-right text-[#333] [clip-path:polygon(0_0,100%_0,calc(100%-5px)_100%,0_100%)]">Data</button>
      {SHEETS.map(([t, c]) => (
        <button key={t} type="button" className={'-ml-[5px] pr-1.5 [clip-path:polygon(8px_0,100%_0,calc(100%-8px)_100%,0_100%)] ' + c}>{t}</button>
      ))}
      <button type="button" aria-label="Insert sheet" className="-ml-[5px] flex w-[38px] items-center justify-center bg-[#eef0f3] pr-1 [clip-path:polygon(8px_0,100%_0,calc(100%-8px)_100%,0_100%)]">
        <svg width="13" height="10" viewBox="0 0 13 10"><path d="M4.500 2.500h7v5l-1 1.500h-6z" fill="#fff" stroke="#7a8bab" /><path d="M3 0v6M0 3h6" stroke="#e09a2e" strokeWidth="1.500" /></svg>
      </button>
      <div className="ml-auto flex w-[686px] items-center">
        <span className="h-[13px] w-1.5 border border-[#8f939b] bg-white" />
        <button type="button" aria-label="Scroll left" className="flex w-4 justify-center"><svg width="5" height="7" viewBox="0 0 5 7"><path d="M5 0v7L0 3.500z" fill="#333" /></svg></button>
        <div className="flex h-[14px] w-[552px] items-center justify-center gap-px rounded-sm border border-[#9a9ea6] bg-gradient-to-b from-white to-[#e6e9ee]">
          <i className="h-1.5 w-px bg-[#777]" /><i className="h-1.5 w-px bg-[#777]" /><i className="h-1.5 w-px bg-[#777]" />
        </div>
        <button type="button" aria-label="Scroll right" className="ml-auto mr-1"><svg width="5" height="7" viewBox="0 0 5 7"><path d="M0 0v7l5-3.500z" fill="#333" /></svg></button>
        <span className="mr-4 h-[13px] w-1.5 border border-[#8f939b] bg-white" />
      </div>
    </div>
  );
}

function StatusBar() {
  return (
    <footer className="flex h-5 items-center border-b border-t border-b-[#8d9199] border-t-[#c7cbd1] bg-gradient-to-b from-[#e6e8eb] to-[#c3c6cb] text-[10px] text-[#444]">
      <span className="pl-1.5">Ready</span>
      <span className="ml-2 h-3 w-px bg-[#c0c3c8]" />
      <div className="ml-auto flex items-center pr-0.5">
        <span className="mr-0.5 h-3.5 w-px bg-[#8d9199]" />
        <button type="button" aria-label="Normal view" className="flex h-[17px] w-[17px] items-center justify-center rounded-sm border border-[#c39a35] bg-[#fbe07a]">
          <svg width="11" height="10" viewBox="0 0 11 10" fill="#fff" stroke="#7f7248"><path d="M.5.500h10v9H.5zM4 .5v9M7.500 .5v9" /></svg>
        </button>
        <button type="button" aria-label="Page layout view" className="ml-0.5"><svg width="13" height="11" viewBox="0 0 13 11" fill="#bbb" stroke="#555"><path d="M.5.500h12v10H.5z" /><path d="M3.500 2.500h6v6h-6z" fill="#fff" /></svg></button>
        <button type="button" aria-label="Page break view" className="ml-1"><svg width="13" height="11" viewBox="0 0 13 11" fill="#ddd" stroke="#555"><path d="M.5.500h12v10H.5zM4 .5v6h5v-6" /></svg></button>
        <span className="mx-1.5 w-[31px] text-center">200%</span>
        <button type="button" aria-label="Zoom out"><svg width="13" height="13" viewBox="0 0 13 13" fill="#fff" stroke="#666"><circle cx="6.500" cy="6.500" r="5.500" /><path d="M4 6.500h5" stroke="#222" strokeWidth="1.500" /></svg></button>
        <input
          type="range" min="0" max="100" defaultValue="66" aria-label="Zoom"
          className="h-4 w-[90px] appearance-none bg-[linear-gradient(#888,#888)] bg-[length:100%_1px] bg-center bg-no-repeat [&::-webkit-slider-thumb]:h-3 [&::-webkit-slider-thumb]:w-2 [&::-webkit-slider-thumb]:appearance-none [&::-webkit-slider-thumb]:rounded-b-full [&::-webkit-slider-thumb]:border [&::-webkit-slider-thumb]:border-[#666] [&::-webkit-slider-thumb]:bg-white"
        />
        <button type="button" aria-label="Zoom in"><svg width="13" height="13" viewBox="0 0 13 13" fill="#fff" stroke="#666"><circle cx="6.500" cy="6.500" r="5.500" /><path d="M4 6.500h5M6.500 4v5" stroke="#222" strokeWidth="1.500" /></svg></button>
        <svg width="10" height="10" viewBox="0 0 10 10" className="ml-1 mt-1.5" fill="#999" aria-hidden="true"><path d="M8 0h2v2H8zM4 4h2v2H4zM8 4h2v2H8zM0 8h2v2H0zM4 8h2v2H4zM8 8h2v2H8z" /></svg>
      </div>
    </footer>
  );
}

export default function App() {
  return (
    <div className={'relative flex h-screen min-h-[600px] flex-col overflow-hidden border-l-4 border-black bg-[#fbfbfc] pb-0.5 pl-1.5 pr-1 ' + UI}>
      <TitleBar />
      <RibbonTabs />
      <div className="flex min-h-0 flex-1 flex-col border-x border-[#a9adb4]">
        <Ribbon />
        <FormulaBar />
        <main className="mt-[3px] flex min-h-0 flex-1 border-t border-[#b3b8c0]">
          <div className="relative min-w-0 flex-1 overflow-hidden bg-white">
            <Grid />
            <Slide />
            <EffectsTable />
          </div>
          <VerticalScroll />
        </main>
        <SheetTabs />
        <StatusBar />
      </div>
      <aside className="absolute right-0 top-4 flex h-[62px] w-[114px] items-center justify-end rounded-l bg-white/95 pb-0.5 pr-[7px] font-['Roboto',sans-serif] text-[24px] text-[#161616]">
        Channel
      </aside>
    </div>
  );
}
